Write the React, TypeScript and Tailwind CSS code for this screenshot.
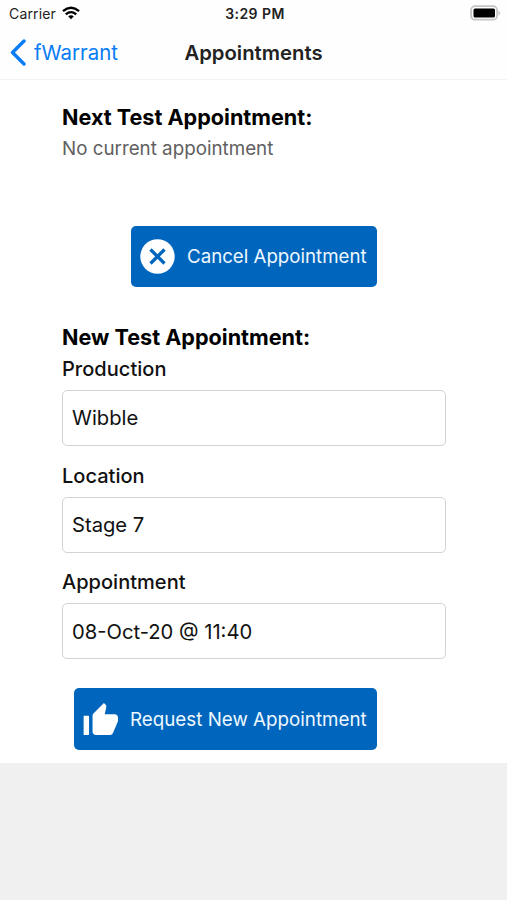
import React from "react";

function Field({ label, value }: { label: string; value: string }) {
  return (
    <label className="block">
      <span className="block h-[33px] text-[20px] font-medium leading-[25px] tracking-[0.03px] text-[#111]">{label}</span>
      <div className="flex h-[56px] items-center rounded-[5px] border-[1.5px] border-[#d3d3d3] pl-[9px] pt-px text-[20.2px] text-[#111]">
        {value}
      </div>
    </label>
  );
}

export default function App() {
  return (
    <div className="flex h-[900px] w-full flex-col overflow-hidden bg-[#f0f0f0] font-['Inter',sans-serif]">
      <div className="h-[763px] shrink-0 bg-white">
        <header className="h-[80px] border-b border-[#f3f3f3] bg-[#fefefe]">
          <div className="grid h-[27px] grid-cols-3 items-center pl-[9px] pr-[6px] text-[14px] text-[#222]">
            <div className="flex items-center gap-[6px]">
              <span className="tracking-[0.15px]">Carrier</span>
              <svg className="mb-[2px]" width="18" height="14" viewBox="0 0 19 14" fill="none" stroke="black" strokeWidth="2.5">
                <path d="M1 5Q9.5-2.2 18 5M4 8.4Q9.5 3.8 15 8.4" />
                <path d="M6.5 10.5Q9.5 8 12.5 10.5L9.5 13.7Z" fill="black" stroke="none" />
              </svg>
            </div>
            <span className="text-center font-semibold tracking-[0.45px]">3:29 PM</span>
            <svg className="mb-px justify-self-end" width="31" height="16" viewBox="0 0 31 16">
              <rect x="1.1" y="1.1" width="26" height="13.6" rx="4" fill="white" stroke="#c5c5c5" strokeWidth="1.8" />
              <rect x="3.5" y="3.4" width="21.5" height="9" rx="1.5" />
              <path d="M28.5 5.2Q32 8 28.5 10.8Z" fill="#c5c5c5" />
            </svg>
          </div>
          <div className="grid h-[52px] grid-cols-3 items-center pl-[10px] pr-[10px]">
            <div className="flex items-center gap-[8px] text-[20.4px] text-[#087cf5]">
              <svg width="16" height="27" viewBox="0 0 16 27" fill="none" stroke="currentColor" strokeWidth="3.4" strokeLinecap="round" strokeLinejoin="round">
                <path d="M14 2L2.5 13.5L14 25" />
              </svg>
              fWarrant
            </div>
            <h1 className="text-center text-[20.3px] font-semibold text-[#222]">Appointments</h1>
          </div>
        </header>
        <main className="pl-[62px] pr-[61px] pt-[25px]">
          <h2 className="h-[32px] text-[21.6px] font-bold leading-[25px] text-black">Next Test Appointment:</h2>
          <p className="h-[89px] text-[18.8px] leading-[24px] text-[#606060]">No current appointment</p>
          <button className="ml-[69px] flex h-[61px] w-[246px] items-center whitespace-nowrap rounded-[5px] bg-[#0066bd] pl-[9px] text-[18.7px] text-[#eef8ff]">
            <svg className="mr-[12px]" width="35" height="35" viewBox="0 0 35 35">
              <circle cx="17.5" cy="17.5" r="17.2" fill="white" />
              <path d="M10.5 10.5L24.5 24.5M24.5 10.5L10.5 24.5" stroke="#0066bd" strokeWidth="3.3" />
            </svg>
            <span className="pt-[2px]">Cancel Appointment</span>
          </button>
          <h2 className="mt-[38px] h-[32px] text-[21.6px] font-bold leading-[25px] text-black">New Test Appointment:</h2>
          <div className="flex flex-col gap-[17.7px]">
            <Field label="Production" value="Wibble" />
            <Field label="Location" value="Stage 7" />
            <Field label="Appointment" value="08-Oct-20 @ 11:40" />
          </div>
          <button className="ml-[12px] mt-[29px] flex h-[62px] w-[303px] items-center whitespace-nowrap rounded-[5px] bg-[#0066bd] pl-[9px] text-[18.8px] text-[#eef8ff]">
            <svg className="mr-[12px]" width="35" height="32" viewBox="1 1 22 20" preserveAspectRatio="none" fill="white">
              <path d="M1.4 21h2.8c.3 0 .6-.3.6-.6V9.6c0-.3-.3-.6-.6-.6H1.4v12zm21.6-11c0-1.1-.9-2-2-2h-6.31l.95-4.57.03-.32c0-.41-.17-.79-.44-1.06L14.17 1 7.59 7.59C7.22 7.95 7 8.45 7 9v10c0 1.1.9 2 2 2h9c.83 0 1.54-.5 1.84-1.22l3.02-7.05c.09-.23.14-.47.14-.73v-2z" />
            </svg>
            <span className="pt-[1px]">Request New Appointment</span>
          </button>
        </main>
      </div>
    </div>
  );
}
